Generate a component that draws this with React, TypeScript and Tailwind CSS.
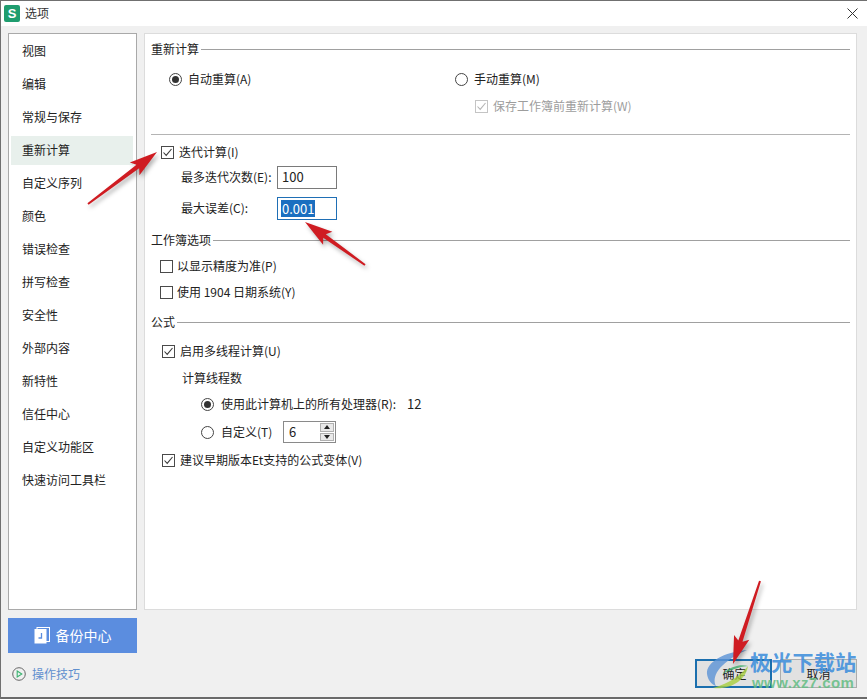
const sideItems = ["视图", "编辑", "常规与保存", "重新计算", "自定义序列", "颜色", "错误检查", "拼写检查", "安全性", "外部内容", "新特性", "信任中心", "自定义功能区", "快速访问工具栏"]

function CheckBox({ disabled = false }: { disabled?: boolean }) {
  const color = disabled ? "#b5b5b5" : "#3a3a3a"
  return (
    <svg width="13" height="13" viewBox="0 0 13 13" className="shrink-0">
      <rect x="0.5" y="0.5" width="12" height="12" fill="#fff" stroke={disabled ? "#c4c4c4" : "#4a4a4a"} />
      <path d="M2.5 6.5 L5.2 9.4 L10.5 3" fill="none" stroke={color} strokeWidth="1.1" />
    </svg>
  )
}

function Empty() {
  return <div className="w-[13px] h-[13px] shrink-0 border border-[#4a4a4a] bg-white" />
}

function Radio({ on = false }: { on?: boolean }) {
  return (
    <div className="w-[13px] h-[13px] shrink-0 rounded-full border border-[#444] bg-white flex items-center justify-center">
      {on && <div className="w-[7px] h-[7px] rounded-full bg-[#333]" />}
    </div>
  )
}

function Heading({ text, className }: { text: string; className: string }) {
  return (
    <div className={`h-5 flex items-center gap-[2px] text-[#222] ${className}`}>
      <span>{text}</span>
      <div className="flex-1 h-px bg-[#a0a0a0]" />
    </div>
  )
}

// tapered red arrow from the tail to the tip
function Arrow({ x1, y1, x2, y2 }: { x1: number; y1: number; x2: number; y2: number }) {
  const len = Math.hypot(x2 - x1, y2 - y1)
  const ux = (x2 - x1) / len
  const uy = (y2 - y1) / len
  const pt = (along: number, side: number) => `${x1 + ux * along - uy * side},${y1 + uy * along + ux * side}`
  const head = len - 24
  const points = [pt(0, -1), pt(head, -2.2), pt(head - 4, -8), pt(len, 0), pt(head - 4, 8), pt(head, 2.2), pt(0, 1)].join(" ")
  return <polygon points={points} fill="#cf1c22" />
}

export default function App() {
  return (
    <div className="relative w-[867px] h-[699px] overflow-hidden flex flex-col bg-[#f0f0f0] border-t border-l border-[#707070] font-['Noto_Sans_CJK_SC','Noto_Sans',sans-serif] text-[12px] leading-5 text-[#222]">
      <div className="h-[25px] shrink-0 bg-white flex items-center pl-[3px] pr-[9px]">
        <div className="w-4 h-[17px] rounded-[2px] bg-[#1f9d6f] text-white text-[13px] font-bold flex items-center justify-center font-['Liberation_Sans',sans-serif]">S</div>
        <span className="ml-[5px] pb-[2px] text-[#333]">选项</span>
        <svg width="11" height="11" viewBox="0 0 11 11" className="ml-auto">
          <path d="M0.5 0.5 L10.5 10.5 M10.5 0.5 L0.5 10.5" stroke="#333" strokeWidth="1" />
        </svg>
      </div>

      <div className="flex flex-1 min-h-0 pl-[7px] pt-[7px] pr-[10px] pb-[1px] gap-[7px] border-b-2 border-[#6a6a6a]">
        <div className="w-[129px] shrink-0 flex flex-col">
          <div className="h-[577px] bg-white border border-[#a9a9a9] pl-[2px] pr-[3px] flex flex-col">
            {sideItems.map((item) => (
              <div key={item} className="h-[33px] shrink-0 pt-[3px]">
                <div className={`h-[29px] flex items-center pl-[11px] pb-px ${item === "重新计算" ? "bg-[#e8f0ec]" : ""}`}>{item}</div>
              </div>
            ))}
          </div>
          <div className="mt-[8px] h-[35px] bg-[#5b8ddf] flex items-center justify-center gap-[6px] pb-px text-white text-[14px]">
            <svg width="16" height="17" viewBox="0 0 16 17">
              <rect x="3" y="0.5" width="12.5" height="14" fill="none" stroke="#fff" />
              <rect x="0.5" y="2" width="12" height="14.5" fill="#fff" />
              <path d="M7.5 6 V11 H4.5" fill="none" stroke="#5b8ddf" strokeWidth="1.3" />
            </svg>
            <span>备份中心</span>
          </div>
          <div className="mt-[11px] pl-[4px] flex items-center gap-[6px] text-[#5f8fce]">
            <svg width="14" height="14" viewBox="0 0 14 14">
              <circle cx="7" cy="7" r="6.3" fill="none" stroke="#666" />
              <path d="M5.2 4 L9.8 7 L5.2 10 Z" fill="none" stroke="#3cb371" strokeWidth="1.1" />
            </svg>
            <span>操作技巧</span>
          </div>
        </div>

        <div className="flex-1 min-w-0 flex flex-col">
          <div className="h-[577px] bg-white border border-[#dcdcdc] pl-[6px] pr-[6px] pt-[5px]">
            <Heading text="重新计算" className="" />
            <div className="mt-[10px] h-5 flex items-center">
              <div className="w-[304px] pl-[18px] flex items-center gap-[6px]">
                <Radio on />
                <span>自动重算(A)</span>
              </div>
              <div className="flex items-center gap-[6px]">
                <Radio />
                <span>手动重算(M)</span>
              </div>
            </div>
            <div className="mt-[7px] h-5 pl-[324px] flex items-center gap-[5px] text-[#9d9d9d]">
              <CheckBox disabled />
              <span>保存工作簿前重新计算(W)</span>
            </div>
            <div className="mt-[18px] h-px bg-[#b4b4b4]" />
            <div className="mt-[7px] h-5 pl-[10px] flex items-center gap-[5px]">
              <CheckBox />
              <span>迭代计算(I)</span>
            </div>
            <div className="mt-[4px] h-[23px] pl-[30px] flex items-center">
              <span className="w-[96px] pb-px">最多迭代次数(E):</span>
              <div className="w-[60px] h-[23px] border border-[#7a7a7a] bg-white pl-[4px] pb-px flex items-center text-[13px]">100</div>
            </div>
            <div className="mt-[8px] h-[23px] pl-[30px] flex items-center">
              <span className="w-[96px] pb-px">最大误差(C):</span>
              <div className="w-[60px] h-[23px] border border-[#1f6fb5] bg-white pl-[3px] flex items-center text-[13px]">
                <span className="bg-[#1a6fc0] text-white leading-[17px] px-px">0.001</span>
              </div>
            </div>
            <Heading text="工作簿选项" className="mt-[10px]" />
            <div className="mt-[6px] h-5 pl-[9px] flex items-center gap-[4px]">
              <Empty />
              <span>以显示精度为准(P)</span>
            </div>
            <div className="mt-[6px] h-5 pl-[9px] flex items-center gap-[4px]">
              <Empty />
              <span>使用 1904 日期系统(Y)</span>
            </div>
            <Heading text="公式" className="mt-[10px]" />
            <div className="mt-[9px] h-5 pl-[11px] flex items-center gap-[5px]">
              <CheckBox />
              <span>启用多线程计算(U)</span>
            </div>
            <div className="mt-[7px] h-5 pl-[31px] flex items-center">计算线程数</div>
            <div className="mt-[6px] h-5 pl-[50px] flex items-center gap-[7px]">
              <Radio on />
              <span className="w-[179px]">使用此计算机上的所有处理器(R):</span>
              <span className="text-[13px]">12</span>
            </div>
            <div className="mt-[7px] h-[22px] pl-[50px] flex items-center gap-[7px]">
              <Radio />
              <span className="w-[55px]">自定义(T)</span>
              <div className="w-[53px] h-[22px] border border-[#8a8a8a] bg-white flex items-center justify-between pl-[5px] pr-px text-[13px]">
                <span>6</span>
                <div className="w-[14px] h-[18px] flex flex-col gap-px">
                  <div className="flex-1 bg-[#e9e9e9] border border-[#b0b0b0] flex items-center justify-center">
                    <div className="w-0 h-0 border-x-[3px] border-x-transparent border-b-[4px] border-b-[#222]" />
                  </div>
                  <div className="flex-1 bg-[#e9e9e9] border border-[#b0b0b0] flex items-center justify-center">
                    <div className="w-0 h-0 border-x-[3px] border-x-transparent border-t-[4px] border-t-[#222]" />
                  </div>
                </div>
              </div>
            </div>
            <div className="mt-[7px] h-5 pl-[11px] flex items-center gap-[5px]">
              <CheckBox />
              <span>建议早期版本Et支持的公式变体(V)</span>
            </div>
          </div>
          <div className="mt-[49px] flex justify-end gap-[8px]">
            <div className="w-[77px] h-[29px] border-2 border-[#1b6fae] bg-[#e1e1e1] pl-[2px] flex items-center justify-center">确定</div>
            <div className="w-[77px] h-[29px] border border-[#adadad] bg-[#e1e1e1] flex items-center justify-center">取消</div>
          </div>
        </div>
      </div>

      {/* watermark and red annotation arrows, both lie over the dialog */}
      <svg width="867" height="699" viewBox="0 0 867 699" className="absolute -left-px -top-px pointer-events-none opacity-80">
        <path d="M747 650 C724 652 706 662 707 674 C708 680 711 684 716 686 C712 678 716 664 747 650 Z" fill="#5b93d6" />
        <path d="M713 688 C731 690 746 680 748 666 C741 675 730 683 713 688 Z" fill="#a9cf3f" />
        <path d="M722 674 C731 666 741 664 748 666 C738 667 731 670 722 674 Z" fill="#3fae6b" />
      </svg>
      <div className="absolute left-[749px] top-[647px] text-[21px] leading-[26px] font-bold tracking-[0.3px] text-[#3f8fdc]/90 whitespace-nowrap">极光下载站</div>
      <div className="absolute left-[751px] top-[673px] text-[15px] leading-[18px] font-bold text-[#63bd83]/85 whitespace-nowrap font-['Liberation_Sans',sans-serif] tracking-[0.4px]">www.xz7.com</div>
      <svg width="867" height="699" viewBox="0 0 867 699" className="absolute -left-px -top-px pointer-events-none drop-shadow-[2px_3px_2px_rgba(0,0,0,0.3)]">
        <Arrow x1={88} y1={204} x2={157} y2={152} />
        <Arrow x1={365} y1={265} x2={305} y2={222} />
        <Arrow x1={760} y1={581} x2={733} y2={664} />
      </svg>
    </div>
  )
}
